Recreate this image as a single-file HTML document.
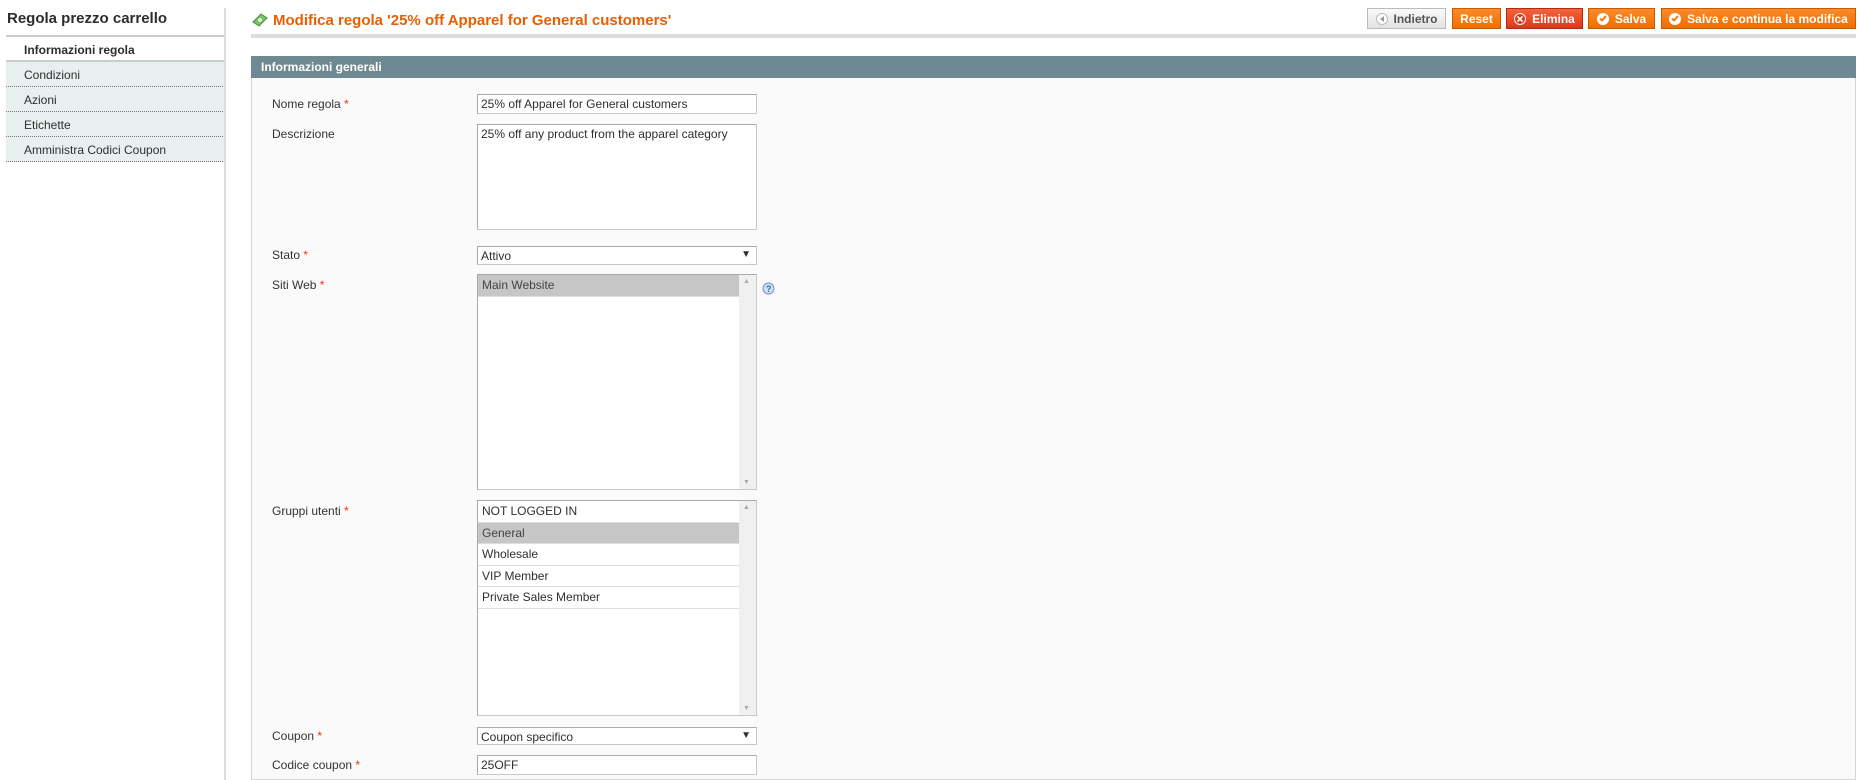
<!DOCTYPE html>
<html><head><meta charset="utf-8"><style>
*{box-sizing:border-box;margin:0;padding:0}
body{width:1865px;height:780px;overflow:hidden;background:#fff;font-family:"Liberation Sans",Arial,sans-serif;font-size:12px;color:#2f2f2f;position:relative}
.a{position:absolute}
.side{left:6px;top:0;width:219px}
.stitle{position:absolute;left:1px;top:10px;font-size:15px;font-weight:bold;color:#2d2d2d}
.sline{position:absolute;left:0;top:35px;width:219px;border-top:2px solid #ccc}
.vline{position:absolute;left:224px;top:8px;height:772px;border-left:2px solid #ddd}
.tab{position:absolute;left:0;width:219px;height:25px;padding:6px 0 0 18px;font-size:12px}
.tab.on{font-weight:bold;color:#2d2d2d;background:#fff;border-bottom:2px solid #ccc}
.tab.off{background:#e7efef;border-bottom:1px dotted #777}
.title{left:273px;top:12px;font-size:15px;font-weight:bold;color:#eb5e00}
.hline{left:251px;top:34px;width:1605px;height:4px;background:#ddd}
.btn{position:absolute;top:8px;height:21px;font-weight:bold;font-size:12px;color:#fff;border:1px solid #c85a00;background:linear-gradient(#fa8b2b,#f06e00);display:flex;align-items:center;justify-content:center}
.ic{width:12px;height:12px;border-radius:50%;background:#fff;margin-right:6px;display:flex;align-items:center;justify-content:center}
.panel{left:251px;top:56px;width:1605px;height:724px;background:#fafafa;border:1px solid #d6d6d6;border-top:none}
.ph{left:251px;top:56px;width:1605px;height:22px;background:#6f8992;color:#fff;font-weight:bold;padding:4px 0 0 10px}
.lbl{position:absolute;left:272px;font-size:12px;color:#333}
.lbl i{color:#eb340a;font-style:normal}
.inp{position:absolute;left:477px;width:280px;background:#fff;border:1px solid #aaa;border-color:#aaa #c8c8c8 #c8c8c8 #aaa;padding:2px 3px;font-size:12px;color:#2f2f2f}
.sb{position:absolute;right:0;top:0;bottom:0;width:17px;background:#f0f0f0}
.sb:before{content:"▲";position:absolute;top:3px;left:4px;font-size:7px;color:#aaa}
.sb:after{content:"▼";position:absolute;bottom:3px;left:4px;font-size:7px;color:#aaa}
.row{height:21.5px;padding:3px 4px;border-bottom:1px solid #ddd;margin-right:17px}
</style></head><body>
<div class="a side">
<div class="stitle">Regola prezzo carrello</div>
<div class="sline"></div>
<div class="tab on" style="top:37px">Informazioni regola</div>
<div class="tab off" style="top:62px">Condizioni</div>
<div class="tab off" style="top:87px">Azioni</div>
<div class="tab off" style="top:112px">Etichette</div>
<div class="tab off" style="top:137px">Amministra Codici Coupon</div>
</div>
<div class="vline"></div>
<svg class="a" style="left:252px;top:13px" width="16" height="14" viewBox="0 0 16 14"><path d="M1 9 L9 1 L15 5 L7 13 Z" fill="#7cbf6a" stroke="#4c8f3c"/><circle cx="8" cy="7" r="2" fill="#d9f0d0"/></svg>
<div class="a title">Modifica regola '25% off Apparel for General customers'</div>
<div class="a hline"></div>
<div class="btn" style="left:1367px;width:79px;background:linear-gradient(#fafafa,#e2e2e2);border-color:#bbb;color:#555"><span class="ic" style="border:1px solid #bbb"><svg width="6" height="6"><path d="M5 0 L1 3 L5 6Z" fill="#999"/></svg></span>Indietro</div>
<div class="btn" style="left:1452px;width:49px">Reset</div>
<div class="btn" style="left:1506px;width:77px;background:linear-gradient(#f4643c,#e2361a);border-color:#b42a10"><span class="ic" style="border:1.5px solid #fff;background:#d83a1e"><svg width="6" height="6"><path d="M0.5 0.5 L5.5 5.5 M5.5 0.5 L0.5 5.5" stroke="#fff" stroke-width="1.6"/></svg></span>Elimina</div>
<div class="btn" style="left:1588px;width:67px"><span class="ic"><svg width="8" height="7"><path d="M1 3.5 L3 5.5 L7 1" stroke="#f07000" stroke-width="1.8" fill="none"/></svg></span>Salva</div>
<div class="btn" style="left:1661px;width:195px"><span class="ic"><svg width="8" height="7"><path d="M1 3.5 L3 5.5 L7 1" stroke="#f07000" stroke-width="1.8" fill="none"/></svg></span>Salva e continua la modifica</div>
<div class="a panel"></div>
<div class="a ph">Informazioni generali</div>
<div class="lbl" style="top:97px">Nome regola <i>*</i></div>
<div class="inp" style="top:94px;height:20px">25% off Apparel for General customers</div>
<div class="lbl" style="top:127px">Descrizione</div>
<div class="inp" style="top:124px;height:106px">25% off any product from the apparel category</div>
<div class="lbl" style="top:248px">Stato <i>*</i></div>
<div class="inp" style="top:246px;height:19px;padding-top:2px">Attivo<span style="position:absolute;right:5px;top:2px;font-size:10px">▼</span></div>
<div class="lbl" style="top:278px">Siti Web <i>*</i></div>
<div class="inp" style="top:274px;height:216px;padding:0"><div class="row" style="background:#c6c6c6;color:#444">Main Website</div><div class="sb"></div></div>
<svg class="a" style="left:762px;top:282px" width="13" height="13"><circle cx="6.5" cy="6.5" r="5.5" fill="#cfe0f4" stroke="#6e94c4"/><text x="4" y="10" font-size="9" font-family="Liberation Sans" fill="#3a6aa8" font-weight="bold">?</text></svg>
<div class="lbl" style="top:504px">Gruppi utenti <i>*</i></div>
<div class="inp" style="top:500px;height:216px;padding:0"><div class="row">NOT LOGGED IN</div><div class="row" style="background:#c6c6c6;color:#444">General</div><div class="row">Wholesale</div><div class="row">VIP Member</div><div class="row">Private Sales Member</div><div class="sb"></div></div>
<div class="lbl" style="top:729px">Coupon <i>*</i></div>
<div class="inp" style="top:727px;height:18px;padding-top:2px">Coupon specifico<span style="position:absolute;right:5px;top:2px;font-size:10px">▼</span></div>
<div class="lbl" style="top:758px">Codice coupon <i>*</i></div>
<div class="inp" style="top:755px;height:20px">25OFF</div>
</body></html>
